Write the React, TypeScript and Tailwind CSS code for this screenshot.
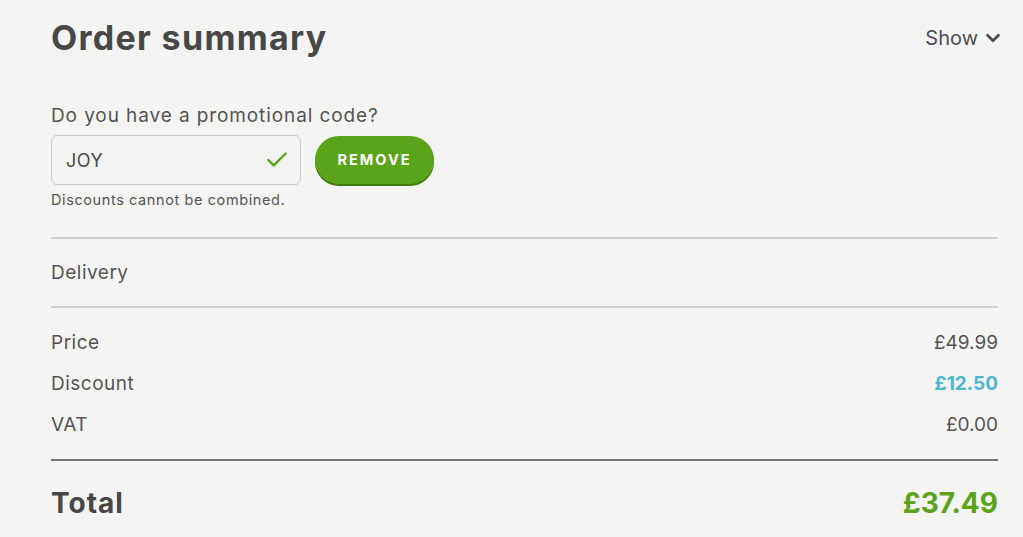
import { Check, ChevronDown } from 'lucide-react';

const font = { fontFamily: 'Inter, "Noto Sans", sans-serif' };

function Row({ label, value, valueClass }: { label: string; value: string; valueClass: string }) {
  return (
    <div className="flex h-[41px] items-center justify-between text-[19px] text-[#545454]">
      <span className="tracking-[0.5px]">{label}</span>
      <span className={valueClass}>{value}</span>
    </div>
  );
}

export default function App() {
  return (
    <div className="min-h-screen bg-[#f4f4f2] pl-[51px] pr-[25px] pt-[16px]" style={font}>
      <div className="flex items-center justify-between">
        <h1 className="text-[34px] font-bold leading-[44px] tracking-[1.3px] text-[#474747]">Order summary</h1>
        <button className="-mr-[6px] flex items-center gap-[4px] text-[20px] text-[#4f4f4f]">
          Show
          <ChevronDown className="h-[22px] w-[22px]" strokeWidth={3} />
        </button>
      </div>

      <p className="mt-[44px] text-[19px] leading-[24px] tracking-[0.9px] text-[#545454]">Do you have a promotional code?</p>
      <div className="mt-[7px] flex items-center gap-[14px]">
        <div className="flex h-[50px] w-[250px] items-center justify-between rounded-[6px] border border-[#c9c9c7] bg-[#f2f2f0] pl-[14px] pr-[10px]">
          <span className="text-[18px] tracking-[0.5px] text-[#4a4a4a]">JOY</span>
          <Check className="h-[26px] w-[26px] text-[#5aa41a]" strokeWidth={2.2} />
        </div>
        <button className="h-[48px] w-[119px] rounded-full bg-[#5aa41a] text-[14.5px] font-bold tracking-[2px] text-white shadow-[0_2px_0_#3f7d0f]">
          REMOVE
        </button>
      </div>
      <p className="mt-[6px] text-[14.5px] leading-[18px] tracking-[0.6px] text-[#555]">Discounts cannot be combined.</p>

      <div className="mt-[28px] h-[2px] bg-[#d0d0ce]" />
      <div className="flex h-[67px] items-center pt-[2px] text-[19px] tracking-[0.5px] text-[#545454]">Delivery</div>
      <div className="h-[2px] bg-[#d0d0ce]" />

      <div className="pt-[15px]">
        <Row label="Price" value="£49.99" valueClass="" />
        <Row label="Discount" value="£12.50" valueClass="font-bold text-[#4db5cc]" />
        <Row label="VAT" value="£0.00" valueClass="" />
      </div>

      <div className="mt-[13px] h-[2px] bg-[#757575]" />
      <div className="flex h-[80px] items-center justify-between pt-[3px]">
        <span className="text-[28px] font-bold tracking-[1px] text-[#474747]">Total</span>
        <span className="text-[28px] font-bold text-[#5aa41a]">£37.49</span>
      </div>
    </div>
  );
}
